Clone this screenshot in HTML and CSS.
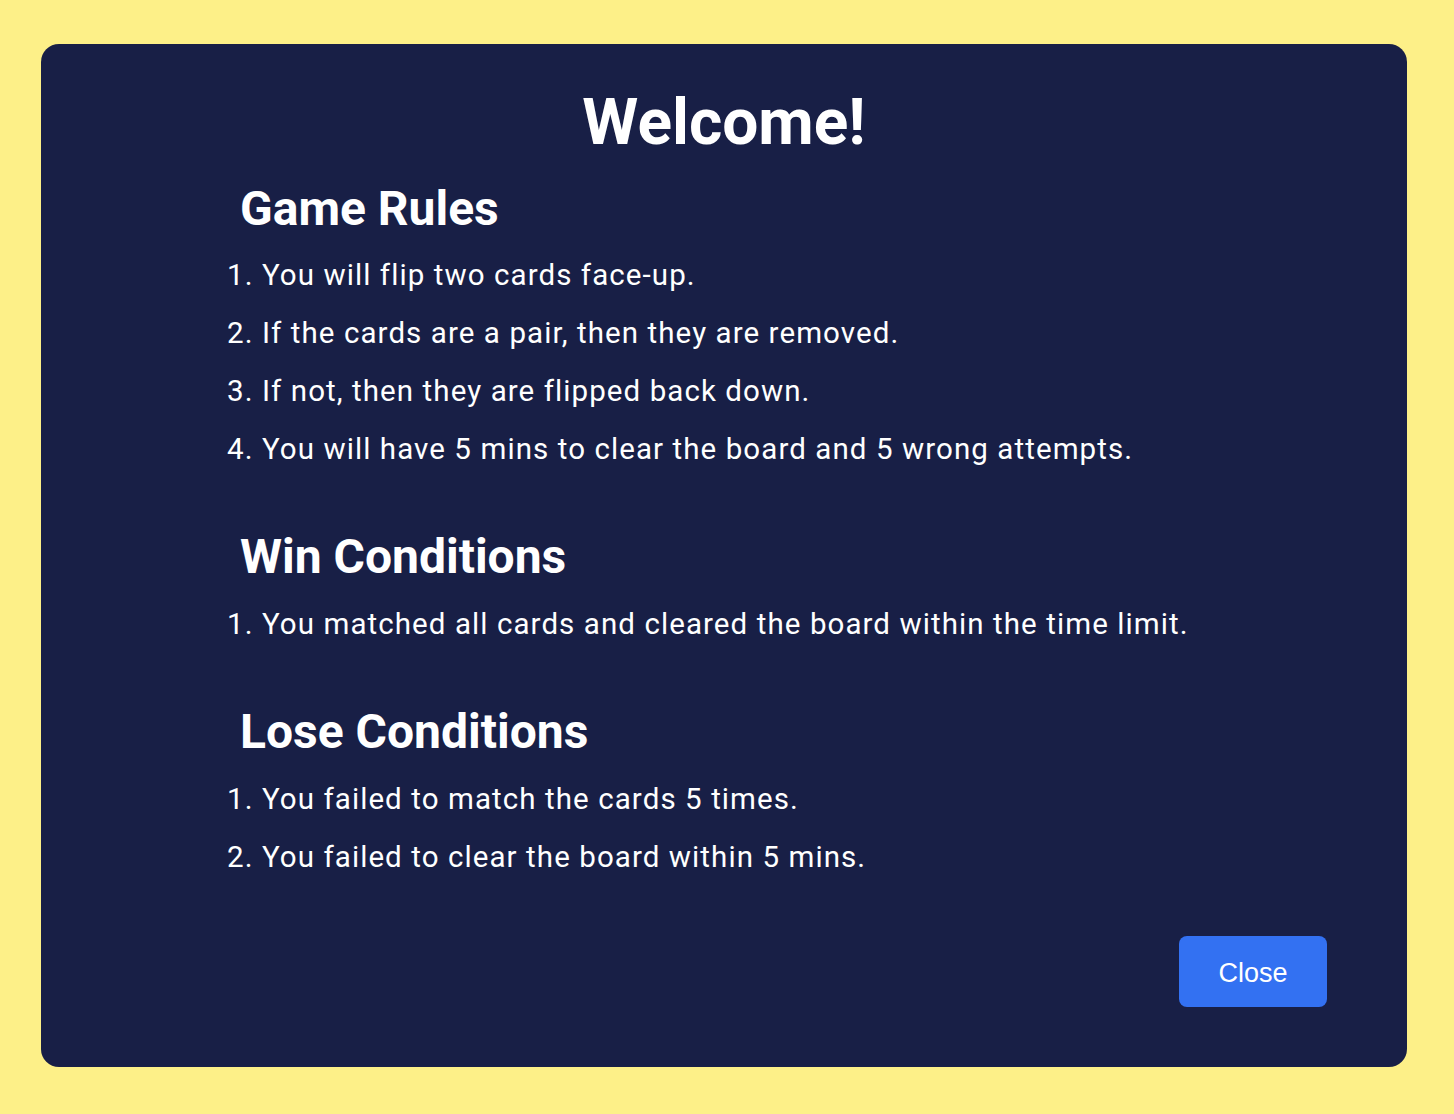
FILE: index.html
```html
<!DOCTYPE html>
<html lang="en">
<head>
<meta charset="utf-8">
<title>Welcome</title>
<link rel="stylesheet" href="styles.css">
</head>
<body>
  <div class="modal">
    <h1 class="title">Welcome!</h1>
    <div class="content">
      <section class="section">
        <h2 class="section-title">Game Rules</h2>
        <ol class="rules">
          <li>You will flip two cards face-up.</li>
          <li>If the cards are a pair, then they are removed.</li>
          <li>If not, then they are flipped back down.</li>
          <li>You will have 5 mins to clear the board and 5 wrong attempts.</li>
        </ol>
      </section>
      <section class="section">
        <h2 class="section-title">Win Conditions</h2>
        <ol class="rules">
          <li>You matched all cards and cleared the board within the time limit.</li>
        </ol>
      </section>
      <section class="section">
        <h2 class="section-title">Lose Conditions</h2>
        <ol class="rules">
          <li>You failed to match the cards 5 times.</li>
          <li>You failed to clear the board within 5 mins.</li>
        </ol>
      </section>
    </div>
    <div class="actions">
      <button class="close-btn" type="button">Close</button>
    </div>
  </div>
</body>
</html>
```

FILE: styles.css
```css
html, body {
  margin: 0;
  height: 100%;
}

body {
  background: #fdf088;
  box-sizing: border-box;
  padding: 44px 47px 47px 41px;
  font-family: Roboto, "Noto Sans", sans-serif;
}

.modal {
  box-sizing: border-box;
  height: 100%;
  background: #181f46;
  border-radius: 18px;
  color: #ffffff;
  display: flex;
  flex-direction: column;
  padding: 41px 80px 60px 186px;
}

.title {
  margin: 0 -80px 18px -186px;
  text-align: center;
  font-size: 64px;
  font-weight: 700;
  line-height: 1.2;
}

.content {
  display: flex;
  flex-direction: column;
}

.section + .section {
  margin-top: 50px;
}

.section-title {
  margin: 0 0 9px 0;
  padding-left: 13px;
  font-size: 48px;
  font-weight: 700;
  line-height: 1.2;
}

.rules {
  margin: 0;
  padding: 0;
  list-style-position: inside;
}

.rules li {
  font-size: 29.5px;
  letter-spacing: 1.08px;
  line-height: 58px;
}

.actions {
  margin-top: auto;
  display: flex;
  justify-content: flex-end;
}

.close-btn {
  width: 148px;
  height: 71px;
  padding: 3px 0 0;
  border: none;
  border-radius: 8px;
  background: #3371f2;
  color: #ffffff;
  font-family: "Liberation Sans", Arial, sans-serif;
  font-size: 27px;
  cursor: pointer;
}
```
